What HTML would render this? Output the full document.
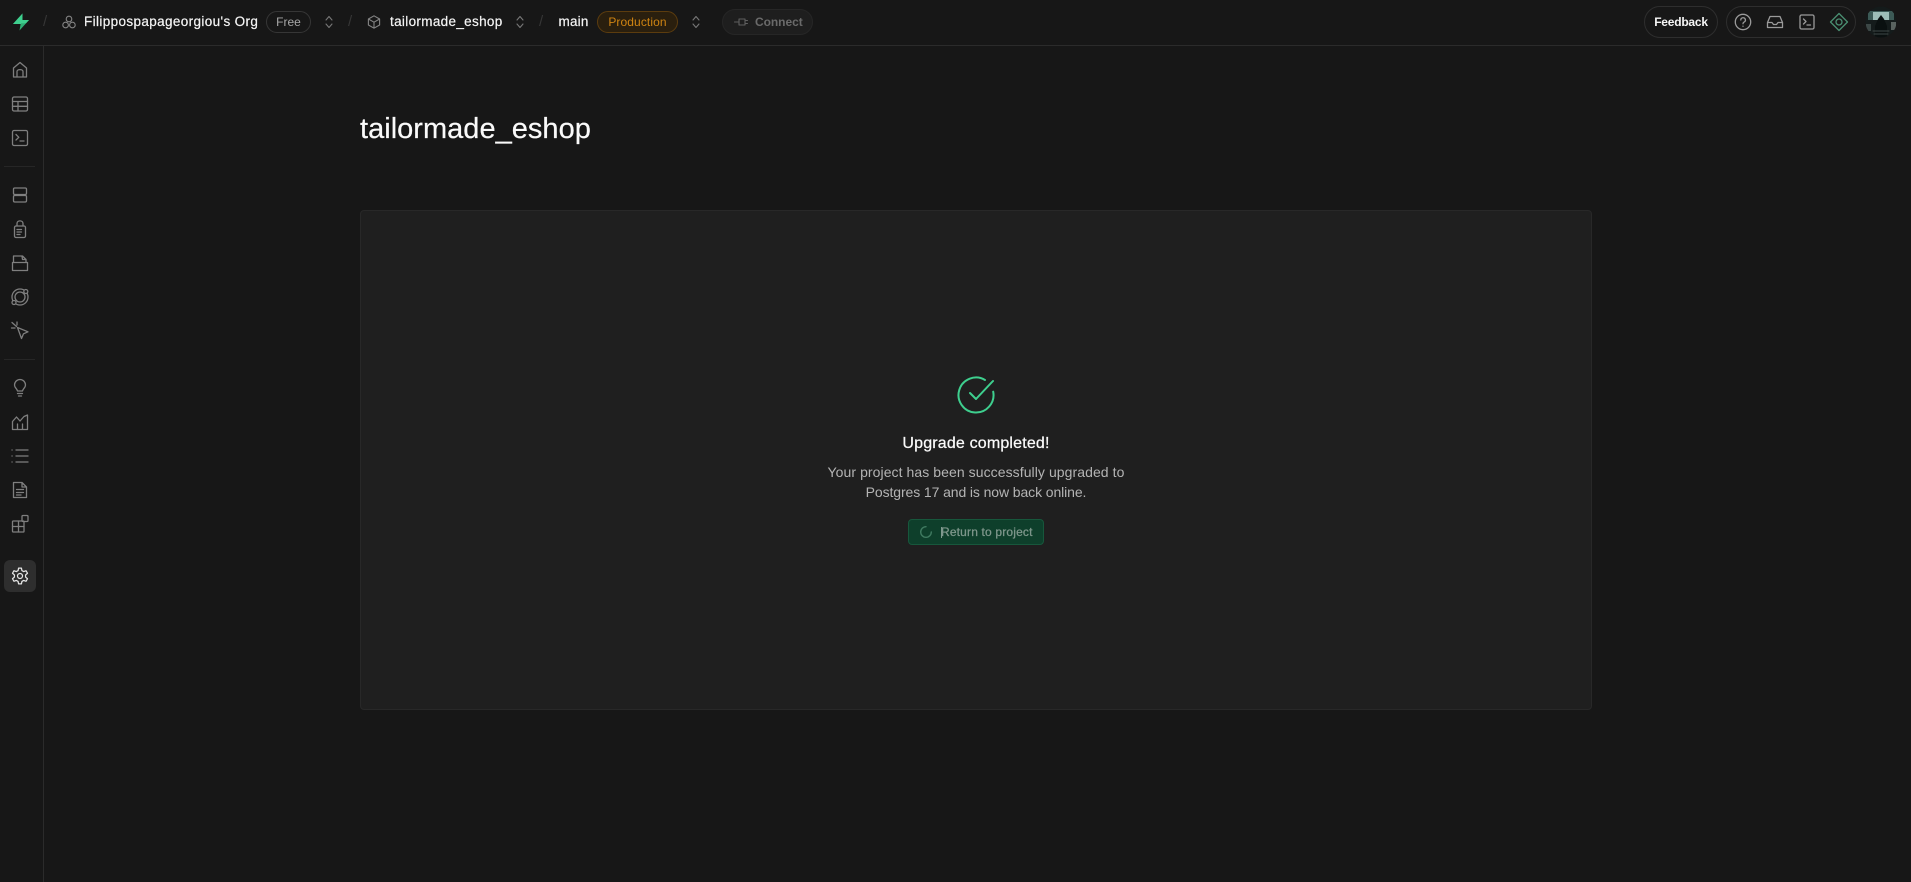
<!DOCTYPE html>
<html lang="en"><head><meta charset="utf-8"><title>tailormade_eshop</title>
<style>
html,body{margin:0;padding:0;background:#171717;width:1911px;height:882px;overflow:hidden}
body{position:relative;font-family:"Liberation Sans",sans-serif;color:#fafafa}
.a{position:absolute;white-space:nowrap}
svg{position:absolute;overflow:visible;fill:none;stroke-linecap:round;stroke-linejoin:round}
.s svg{stroke:#7f7f7f;stroke-width:1.3;width:20px;height:20px;left:10px}
.t svg{stroke:#9a9a9a;stroke-width:1.3;width:20px;height:20px;top:12px}
.sl{color:#363636;font-size:15px;top:13px}
.ch{stroke:#777;stroke-width:1.1;width:10px;height:14px;top:15px}
.n{font-size:13.5px;top:14px;line-height:16px;color:#f5f5f5;-webkit-text-stroke:.2px #f5f5f5}
.pill{box-sizing:border-box;border-radius:20px;text-align:center}
</style></head><body>
<div class="a" style="left:0;top:45px;width:1911px;height:1px;background:#2b2b2b"></div>
<div class="a" style="left:43px;top:45px;width:1px;height:837px;background:#2b2b2b"></div>
<svg style="left:12px;top:13px;width:18px;height:18px" viewBox="0 0 18 18"><path d="M10.5 0.5 L1 11 H8.7 Z" fill="#3ecf8e" stroke="none"/><path d="M7.5 17.5 L17 7 H9.3 Z" fill="#2fae75" stroke="none"/><path d="M10.5 0.5V7H17L14 10.3H9V11H1" fill="#3ecf8e" stroke="none"/></svg>
<div class="a sl" style="left:43px">/</div>
<svg style="left:62px;top:15px;width:14px;height:14px;stroke:#858585;stroke-width:1.1" viewBox="0 0 14 14"><circle cx="7" cy="4" r="2.8"/><circle cx="3.6" cy="10" r="2.8"/><circle cx="10.4" cy="10" r="2.8"/></svg>
<div class="a n" style="left:84px;letter-spacing:.37px">Filippospapageorgiou's Org</div>
<div class="a pill" style="left:266px;top:11px;width:45px;height:22px;border:1px solid #363636;color:#a8a8a8;font-size:12px;line-height:20px">Free</div>
<svg class="ch" style="left:324px" viewBox="0 0 10 14"><path d="M2 5 5 1.5 8 5M2 9l3 3.5L8 9"/></svg>
<div class="a sl" style="left:348px">/</div>
<svg style="left:367px;top:15px;width:14px;height:14px;stroke:#858585;stroke-width:1.1" viewBox="0 0 14 14"><path d="M7 .8 12.6 4v6L7 13.2 1.4 10V4ZM1.4 4 7 7.2 12.6 4M7 7.2v6"/></svg>
<div class="a n" style="left:390px;letter-spacing:.33px">tailormade_eshop</div>
<svg class="ch" style="left:515px" viewBox="0 0 10 14"><path d="M2 5 5 1.5 8 5M2 9l3 3.5L8 9"/></svg>
<div class="a sl" style="left:539px">/</div>
<div class="a n" style="left:558.500px;letter-spacing:.2px">main</div>
<div class="a pill" style="left:597px;top:11px;width:81px;height:22px;border:1px solid #5c3c0e;background:#2a1f0e;color:#cf8412;font-size:12px;line-height:20px;letter-spacing:.1px">Production</div>
<svg class="ch" style="left:691px" viewBox="0 0 10 14"><path d="M2 5 5 1.5 8 5M2 9l3 3.5L8 9"/></svg>
<div class="a pill" style="left:722px;top:9px;width:91px;height:26px;border:1px solid #262626;background:#1e1e1e"></div>
<svg style="left:734px;top:16px;width:14px;height:12px;stroke:#5f5f5f;stroke-width:1.1" viewBox="0 0 14 12"><path d="M.5 6H4M5 3.5V8.5M5 3H11V9H5M11 4.5H13.5M11 7.5H13.5"/></svg>
<div class="a" style="left:755px;top:15px;font-size:12px;line-height:14px;color:#6a6a6a;font-weight:bold;letter-spacing:-.05px">Connect</div>
<div class="a pill" style="left:1644px;top:6px;width:74px;height:32px;border:1px solid #2e2e2e;color:#f5f5f5;font-size:12px;line-height:30px;font-weight:bold;letter-spacing:-.22px">Feedback</div>
<div class="a pill" style="left:1726px;top:6px;width:130px;height:32px;border:1px solid #2e2e2e"></div>
<div class="t">
<svg style="left:1733px" viewBox="0 0 20 20"><circle cx="10" cy="10" r="7.7"/><path d="M7.8 8a2.3 2.3 0 1 1 3.3 2.1c-.8.4-1.1.9-1.1 1.6M10 14.2v.1"/></svg>
<svg style="left:1765px" viewBox="0 0 20 20"><path d="M2.5 10.5 5 4.5H15L17.5 10.5V15.5H2.5ZM2.5 10.5H7L8.5 12.5H11.5L13 10.5H17.5"/></svg>
<svg style="left:1797px" viewBox="0 0 20 20"><rect x="3" y="3" width="14" height="14" rx="1.5"/><path d="M6.5 7 9 9.5 6.5 12M10 13H13.5"/></svg>
<svg style="left:1829px;stroke:#4a8f72" viewBox="0 0 20 20"><path d="M10 1.5 18.500 10 10 18.500 1.500 10Z"/><circle cx="10" cy="10" r="3"/></svg>
</div>
<svg style="left:1865px;top:6px;width:32px;height:32px" viewBox="0 0 32 32"><defs><clipPath id="c"><circle cx="16" cy="16" r="15.500"/></clipPath></defs><g clip-path="url(#c)" stroke="none"><rect width="32" height="32" fill="#141b1b"/><rect x="3" y="5" width="26" height="9" fill="#3c5a56"/><rect x="8" y="6" width="16" height="8" fill="#9dbdb7"/><path d="M10 32V20L13 13 16 9 19 13 22 20V32Z" fill="#0a1010"/><rect x="1" y="18" width="5" height="7" fill="#3c4746"/><rect x="26" y="16" width="5" height="8" fill="#59625f"/><path d="M8 25H24M9 28H23" stroke="#3f4947" stroke-width="1"/></g></svg>

<div class="s">
<svg style="top:60px" viewBox="0 0 20 20"><path d="M3.500 17V8L10 2.500 16.500 8V17ZM7 17V11.500C7 9 13 9 13 11.500V17"/></svg>
<svg style="top:94px" viewBox="0 0 20 20"><rect x="2.500" y="3" width="15" height="14" rx="1.500"/><path d="M2.500 7.500H17.500M2.500 12.300H17.500M8 7.500V17"/></svg>
<svg style="top:128px" viewBox="0 0 20 20"><rect x="2.500" y="2.500" width="15" height="15" rx="1.500"/><path d="M6 6.500 8.800 9.300 6 12M10 13H14"/></svg>
<svg style="top:185px" viewBox="0 0 20 20"><rect x="3.500" y="3" width="13" height="6.500" rx="1.200"/><rect x="3.500" y="10.500" width="13" height="6.500" rx="1.200"/></svg>
<svg style="top:219px" viewBox="0 0 20 20"><path d="M7 7V4.500C7 1 13 1 13 4.500V7"/><rect x="4.500" y="7" width="11" height="11.500" rx="1.500"/><path d="M7 10.500H11.500M7 13H11.500M7 15.500H10"/></svg>
<svg style="top:253px" viewBox="0 0 20 20"><path d="M2.500 17.500V9.500H17.500V17.500ZM3.500 9.500V3H12.500L16 6.500V9.500M12 3.200 12.500 6.500H15.800"/></svg>
<svg style="top:287px" viewBox="0 0 20 20"><circle cx="10" cy="10" r="8"/><circle cx="10" cy="10" r="5"/><circle cx="15.800" cy="4.500" r="2" fill="#171717"/><circle cx="4" cy="15.500" r="2" fill="#171717"/></svg>
<svg style="top:321px" viewBox="0 0 20 20"><path d="M7.500 6.500 18 10.800 13.500 12.800 11.500 17.500ZM2 1.500 6.500 5.500M1.500 7H5M7 1V4"/></svg>
<svg style="top:378px" viewBox="0 0 20 20"><path d="M7.500 13C7 10.500 4.500 9.700 4.500 7A5.500 5.500 0 0 1 15.500 7C15.500 9.700 13 10.500 12.500 13ZM7.500 15.500H12.500M8.500 18H11.500"/></svg>
<svg style="top:412px" viewBox="0 0 20 20"><path d="M2.500 17.500V9.500L6.500 5 10 9 14 4.500 17.500 3V17.500ZM7.500 17.500V12M12.500 17.500V12"/></svg>
<svg style="top:446px" viewBox="0 0 20 20"><path d="M6 4H18M6 10H18M6 16H18M2 4H2.100M2 10H2.100M2 16H2.100"/></svg>
<svg style="top:480px" viewBox="0 0 20 20"><path d="M3.500 2.500H12L16.500 7V17.500H3.500ZM12 2.500V7H16.500M6.500 9.500H13.500M6.500 12.500H13.500M6.500 15H11"/></svg>
<svg style="top:514px" viewBox="0 0 20 20"><rect x="2.500" y="7" width="11.500" height="11" rx=".8"/><path d="M8.500 7V18M2.500 12.500H14"/><rect x="12" y="1.500" width="6" height="6" rx="1"/></svg>
</div>
<div class="a" style="left:4px;top:166px;width:31px;height:1px;background:#262626"></div>
<div class="a" style="left:4px;top:359px;width:31px;height:1px;background:#262626"></div>
<div class="a" style="left:4px;top:560px;width:32px;height:32px;border-radius:6px;background:#2e2e2e"></div>
<svg style="left:10px;top:566px;width:20px;height:20px;stroke:#e6e6e6;stroke-width:1.500" viewBox="0 0 24 24"><circle cx="12" cy="12" r="3"/><path d="M10.300 2.500h3.400l.6 3 2.100 1.200 2.900-1 1.700 3-2.300 2v2.600l2.300 2-1.700 3-2.900-1-2.100 1.200-.6 3h-3.400l-.6-3-2.100-1.200-2.900 1-1.700-3 2.300-2v-2.600l-2.300-2 1.700-3 2.900 1 2.100-1.200z"/></svg>

<div class="a" style="left:360px;top:111px;font-size:29px;line-height:36px;color:#fafafa;letter-spacing:.02px;-webkit-text-stroke:.2px #fafafa">tailormade_eshop</div>
<div class="a" style="left:360px;top:210px;box-sizing:border-box;width:1232px;height:500px;background:#1f1f1f;border:1px solid #282828;border-radius:4px"></div>
<svg style="left:956px;top:375px;width:40px;height:40px;stroke:#3ecf8e;stroke-width:2" viewBox="0 0 40 40"><path d="M29 5A17.500 17.500 0 1 0 37.200 16.700"/><path d="M14 18 20 24 37 6"/></svg>
<div class="a" style="left:803px;width:346px;top:434px;text-align:center;font-size:16px;line-height:19px;color:#fafafa;letter-spacing:.17px;-webkit-text-stroke:.25px #fafafa">Upgrade completed!</div>
<div class="a" style="left:803px;width:346px;top:462px;text-align:center;font-size:14px;line-height:20px;color:#b4b4b4"><span style="letter-spacing:.07px">Your project has been successfully upgraded to</span><br><span style="letter-spacing:-.1px">Postgres 17 and is now back online.</span></div>
<div class="a" style="left:908px;top:519px;box-sizing:border-box;width:136px;height:26px;background:#0e3f2b;border:1px solid #17573c;border-radius:4px"></div>
<svg style="left:920px;top:526px;width:12px;height:12px;stroke:#3f7a60;stroke-width:1.400" viewBox="0 0 12 12"><path d="M6 .7A5.300 5.300 0 1 0 11.300 6"/></svg>
<div class="a" style="left:941px;top:527px;width:1px;height:11px;background:#7f9a8e"></div>
<div class="a" style="left:941px;top:525px;font-size:12px;line-height:14px;color:#7f978c;letter-spacing:.17px;-webkit-text-stroke:.25px #7f978c">Return to project</div>
</body></html>
